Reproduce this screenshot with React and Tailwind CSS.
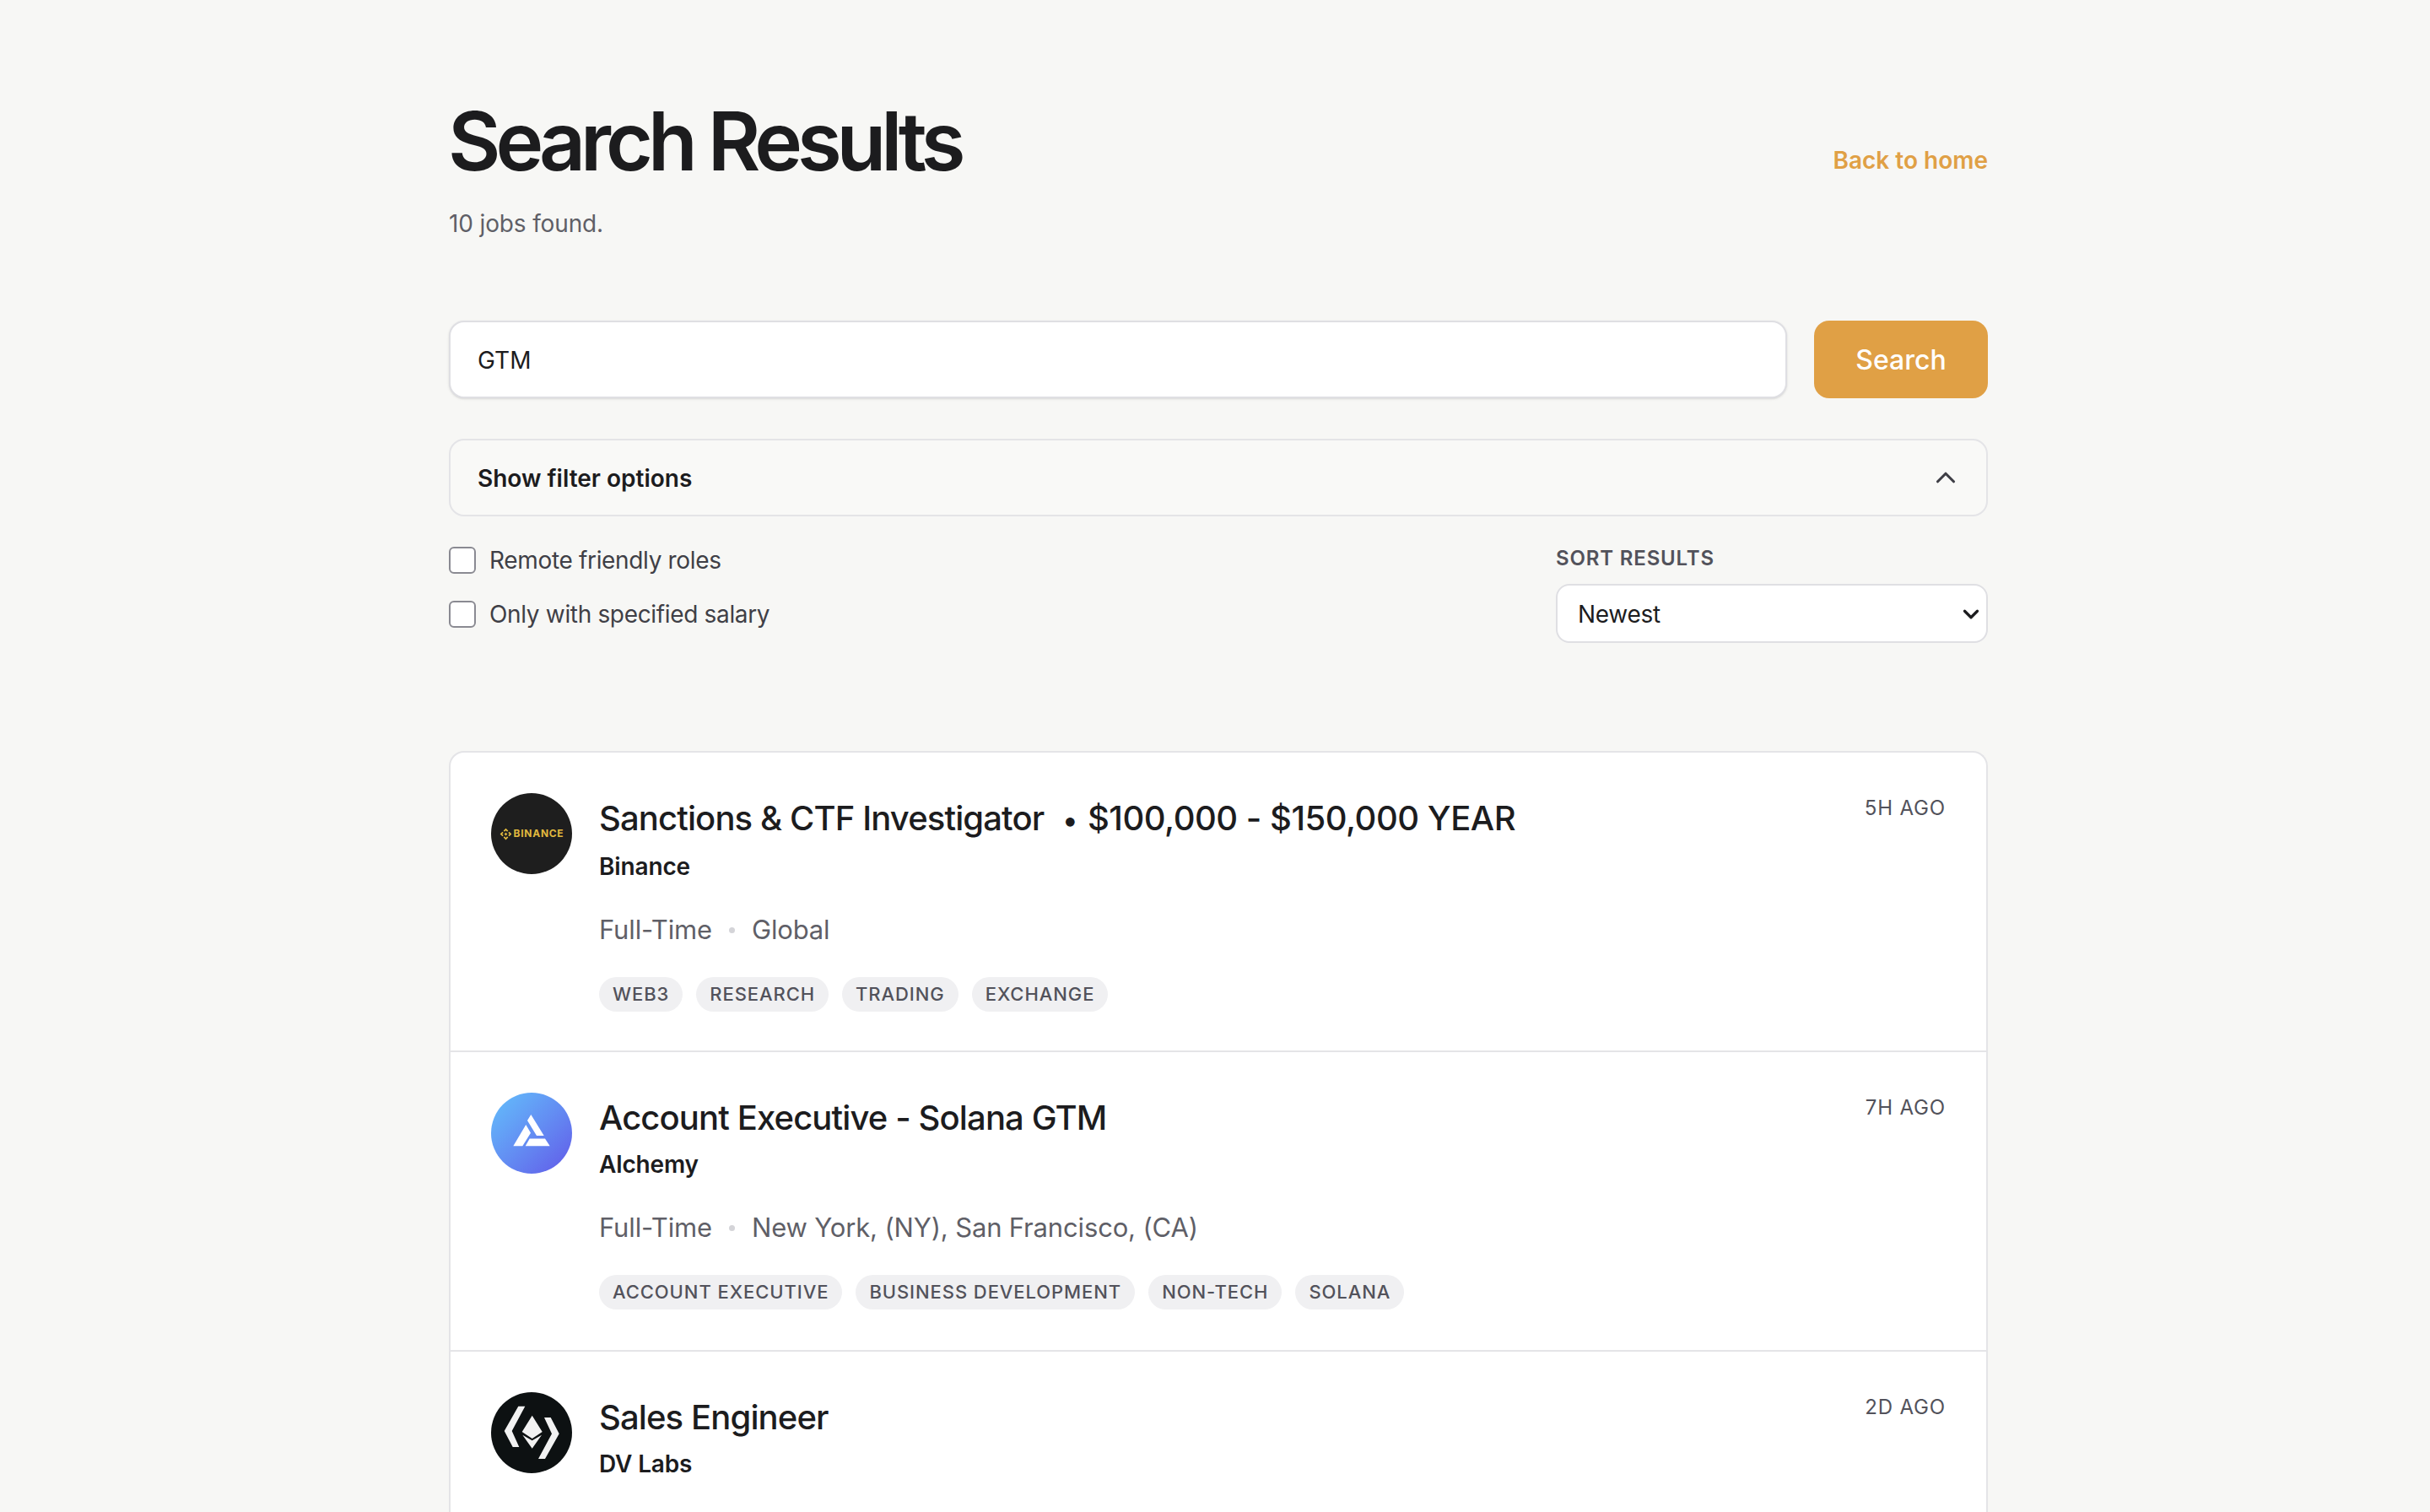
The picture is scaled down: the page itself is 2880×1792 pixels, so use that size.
import { ChevronUp, ChevronDown } from 'lucide-react';

const jobs = [
  {
    id: 1,
    logo: 'binance',
    title: 'Sanctions & CTF Investigator',
    salary: '$100,000 - $150,000 YEAR',
    company: 'Binance',
    type: 'Full-Time',
    location: 'Global',
    tags: ['WEB3', 'RESEARCH', 'TRADING', 'EXCHANGE'],
    age: '5H AGO',
  },
  {
    id: 2,
    logo: 'alchemy',
    title: 'Account Executive - Solana GTM',
    company: 'Alchemy',
    type: 'Full-Time',
    location: 'New York, (NY), San Francisco, (CA)',
    tags: ['ACCOUNT EXECUTIVE', 'BUSINESS DEVELOPMENT', 'NON-TECH', 'SOLANA'],
    age: '7H AGO',
  },
  {
    id: 3,
    logo: 'dvlabs',
    title: 'Sales Engineer',
    company: 'DV Labs',
    age: '2D AGO',
  },
];

function BinanceLogo() {
  return (
    <div className="flex h-24 w-24 shrink-0 items-center justify-center gap-[2px] rounded-full bg-[#1e1e1e]">
      <svg viewBox="0 0 24 24" className="h-[15px] w-[15px]" fill="#e0b83e">
        <path d="M12 1l4.5 4.5-2 2L12 5 9.500 7.500l-2-2zM5.500 7.500l2 2L5 12l2.500 2.500-2 2L1 12zM18.500 7.500L23 12l-4.500 4.500-2-2L19 12l-2.500-2.500zM12 9l3 3-3 3-3-3zM9.500 16.500L12 19l2.500-2.500 2 2L12 23l-4.500-4.500z" />
      </svg>
      <span className="text-[12px] leading-none font-bold tracking-[0.06em] text-[#e0b83e]">BINANCE</span>
    </div>
  );
}

function AlchemyLogo() {
  return (
    <div className="h-24 w-24 shrink-0 rounded-full bg-gradient-to-br from-[#62c0fb] to-[#6157e8]">
      <svg viewBox="0 0 96 96" className="h-24 w-24" fill="#fff">
        <path d="M47.300 26L62.700 51H54L43 33zM41.300 38L47 47.700 37.300 63.300H26.300zM45.700 54.600H64L69.700 63.300H40.700z" />
      </svg>
    </div>
  );
}

function DvLabsLogo() {
  return (
    <div className="h-24 w-24 shrink-0 rounded-full bg-[#0d1112]">
      <svg viewBox="0 0 96 96" className="h-24 w-24" fill="#f2f2f2">
        <path d="M32.300 16.700H40.300L24.700 46 33.300 65H25.700L15.700 46zM63 30H70.700L80.700 49.300 64 79H56L72 49.300zM48.700 27.700L60.700 47 48.700 55 36.700 47zM37.300 50.700L48.700 57.300 60 50.700 48.700 66.700z" />
      </svg>
    </div>
  );
}

function JobLogo({ logo }) {
  if (logo === 'binance') return <BinanceLogo />;
  if (logo === 'alchemy') return <AlchemyLogo />;
  return <DvLabsLogo />;
}

function JobRow({ job }) {
  return (
    <div className="flex h-[355px] gap-[32px] border-b-2 border-[#e4e4e7] px-[48px] pt-[48px]">
      <JobLogo logo={job.logo} />
      <div className="min-w-0 flex-1">
        <div className="mt-[2px] flex items-start justify-between">
          <h2 className="text-[40px] leading-[56px] font-[540] tracking-[-0.022em] text-[#1c1c1e]">
            {job.title}
            {job.salary && <span className="ml-[22px] tracking-[-0.012em]"><span className="mr-[12px] text-[34px]">•</span>{job.salary}</span>}
          </h2>
          <span className="text-[24px] leading-[32px] tracking-[0.035em] text-[#52525b]">{job.age}</span>
        </div>
        <p className="mt-[7px] text-[28px] leading-[40px] font-semibold tracking-[-0.005em] text-[#1c1c1e]">{job.company}</p>
        {job.type && (
          <div className="mt-[31px] flex items-center text-[31px] leading-[48px] tracking-[-0.005em] text-[#5f5f67]">
            <span>{job.type}</span>
            <span className="mx-[20px] h-[7px] w-[7px] rounded-full bg-[#d4d4d8]" />
            <span>{job.location}</span>
          </div>
        )}
        {job.tags && (
          <div className="mt-[32px] flex gap-[16px]">
            {job.tags.map((tag) => (
              <span key={tag} className="flex h-[41px] items-center rounded-full bg-[#f0f0f2] px-[16px] text-[22px] font-medium tracking-[0.042em] text-[#52525b]">
                {tag}
              </span>
            ))}
          </div>
        )}
      </div>
    </div>
  );
}

export default function App() {
  return (
    <div className="h-screen overflow-hidden bg-[#f7f7f5] font-['Inter',sans-serif]">
      <div className="ml-[532px] w-[1824px] pt-[112px]">
        <div className="flex items-start justify-between">
          <div>
            <h1 className="-ml-[1px] text-[96px] leading-[110px] font-[620] tracking-[-0.063em] text-[#1c1c1e]">Search Results</h1>
            <p className="mt-[21px] text-[28px] leading-[44px] tracking-[-0.005em] text-[#5f5f67]">10 jobs found.</p>
          </div>
          <a className="mt-[58px] text-[28px] leading-[40px] font-semibold text-[#e0a045]">Back to home</a>
        </div>

        <div className="mt-[93px] flex gap-[32px]">
          <input
            readOnly
            value="GTM"
            className="h-[92px] flex-1 rounded-[18px] border-2 border-[#dfdfe3] bg-white px-[32px] pt-[2px] text-[28px] text-[#1c1c1e] shadow-sm outline-none"
          />
          <button className="h-[92px] w-[206px] rounded-[18px] bg-[#e0a045] pt-[2px] text-[32px] font-medium text-white">Search</button>
        </div>

        <button className="mt-[48px] flex h-[92px] w-full items-center justify-between rounded-[18px] border-2 border-[#e4e4e7] bg-[#f9f9f7] px-[32px] text-[28px] font-semibold text-[#1c1c1e]">
          <span className="pt-[2px]">Show filter options</span>
          <ChevronUp size={38} strokeWidth={2} className="-mr-[3px] text-[#3f3f46]" />
        </button>

        <div className="mt-[30px] flex items-start justify-between">
          <div className="flex flex-col gap-[32px] pt-[6px]">
            <label className="flex items-center gap-[16px] text-[28px] leading-[32px] tracking-[-0.012em] text-[#3f3f46]">
              <input type="checkbox" className="h-[32px] w-[32px] appearance-none rounded-[6px] border-2 border-[#8a8a92] bg-white" />
              Remote friendly roles
            </label>
            <label className="flex items-center gap-[16px] text-[28px] leading-[32px] tracking-[-0.012em] text-[#3f3f46]">
              <input type="checkbox" className="h-[32px] w-[32px] appearance-none rounded-[6px] border-2 border-[#8a8a92] bg-white" />
              Only with specified salary
            </label>
          </div>
          <div className="w-[512px]">
            <p className="mt-[2px] text-[24px] leading-[36px] font-semibold tracking-[0.035em] text-[#52525b]">SORT RESULTS</p>
            <div className="relative mt-[12px]">
              <select className="h-[70px] w-full appearance-none rounded-[16px] border-2 border-[#dfdfe3] bg-white px-[24px] pt-[2px] text-[28px] tracking-[-0.01em] text-[#1c1c1e] outline-none">
                <option>Newest</option>
              </select>
              <ChevronDown size={30} strokeWidth={2.6} className="pointer-events-none absolute top-[21px] right-[5px] text-[#1c1c1e]" />
            </div>
          </div>
        </div>

        <div className="mt-[128px] overflow-hidden rounded-t-[18px] border-x-2 border-t-2 border-[#e4e4e7] bg-white">
          {jobs.map((job) => (
            <JobRow key={job.id} job={job} />
          ))}
        </div>
      </div>
    </div>
  );
}
